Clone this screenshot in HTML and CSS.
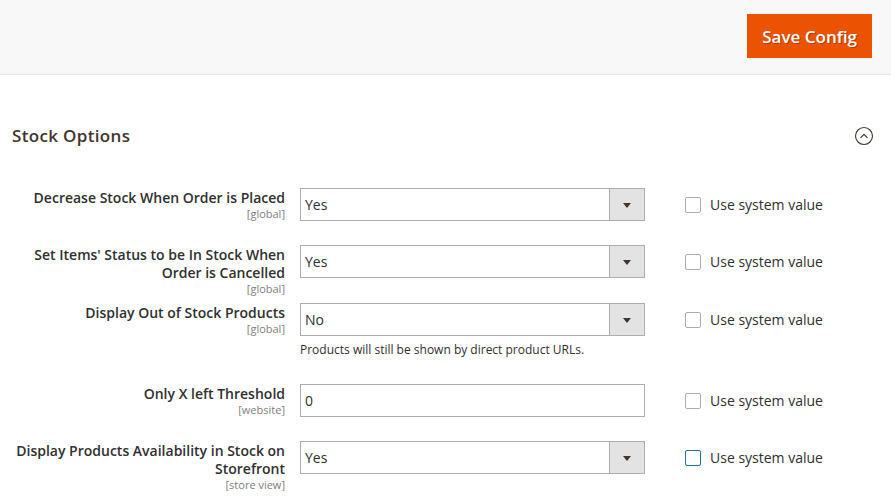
FILE: index.html
```html
<!DOCTYPE html>
<html lang="en">
<head>
  <meta charset="UTF-8" />
  <title>Configuration - Inventory</title>
  <link rel="stylesheet" href="styles.css">
</head>
<body>

<header class="page-actions">
  <button class="btn-primary" type="button">Save Config</button>
</header>

<main class="config">
  <div class="section-head">
    <h2>Stock Options</h2>
    <svg class="collapse" width="20" height="20" viewBox="0 0 20 20">
      <circle cx="10" cy="10" r="8.5" fill="none" stroke="#41362f" stroke-width="1.1" />
      <polyline points="6.5,11.8 10,8.3 13.5,11.8" fill="none" stroke="#41362f" stroke-width="1.2" />
    </svg>
  </div>

  <div class="fields">
    <div class="field">
      <div class="label">Decrease Stock When Order is Placed<span class="scope">[global]</span></div>
      <div class="value">
        <div class="select"><span class="select-text">Yes</span><span class="select-arrow"></span></div>
      </div>
      <label class="use-default"><span class="check"></span>Use system value</label>
    </div>

    <div class="field">
      <div class="label">Set Items' Status to be In Stock When Order is Cancelled<span class="scope">[global]</span></div>
      <div class="value">
        <div class="select"><span class="select-text">Yes</span><span class="select-arrow"></span></div>
      </div>
      <label class="use-default"><span class="check"></span>Use system value</label>
    </div>

    <div class="field">
      <div class="label">Display Out of Stock Products<span class="scope">[global]</span></div>
      <div class="value">
        <div class="select"><span class="select-text">No</span><span class="select-arrow"></span></div>
        <p class="note">Products will still be shown by direct product URLs.</p>
      </div>
      <label class="use-default"><span class="check"></span>Use system value</label>
    </div>

    <div class="field">
      <div class="label">Only X left Threshold<span class="scope">[website]</span></div>
      <div class="value">
        <div class="input">0</div>
      </div>
      <label class="use-default"><span class="check"></span>Use system value</label>
    </div>

    <div class="field">
      <div class="label">Display Products Availability in Stock on Storefront<span class="scope">[store view]</span></div>
      <div class="value">
        <div class="select"><span class="select-text">Yes</span><span class="select-arrow"></span></div>
      </div>
      <label class="use-default"><span class="check focus"></span>Use system value</label>
    </div>
  </div>
</main>

</body>
</html>
```

FILE: styles.css
```css
body {
  font-family: 'Open Sans', 'Noto Sans', sans-serif;
  color: #303030;
  background: #fff;
  margin: 0;
}
.page-actions {
  height: 75px;
  background: #f8f8f8;
  border-bottom: 1px solid #e3e3e3;
  display: flex;
  justify-content: flex-end;
  align-items: flex-start;
  padding: 14px 19px 0 0;
  box-sizing: border-box;
}
.btn-primary {
  height: 44px;
  padding: 0 15px;
  border: none;
  background: #eb5202;
  color: #fff;
  font-family: inherit;
  font-size: 17px;
  font-weight: 600;
  text-shadow: 1px 1px 0 rgba(0, 0, 0, 0.25);
  cursor: pointer;
}
.section-head {
  display: flex;
  justify-content: space-between;
  align-items: center;
  margin-top: 49px;
  padding: 0 17px 0 12px;
}
.section-head h2 {
  margin: 0;
  font-size: 17px;
  line-height: 24px;
  font-weight: 600;
  color: #41362f;
  letter-spacing: 0.02em;
}
.fields {
  margin-top: 40px;
  padding-left: 12px;
}
.field {
  display: flex;
  align-items: flex-start;
  margin-bottom: 24px;
}
.label {
  width: 273px;
  margin: 1px 0 -3px 0;
  text-align: right;
  font-size: 14px;
  line-height: 18px;
  font-weight: 600;
  color: #303030;
}
.scope {
  display: block;
  font-size: 11px;
  line-height: 14px;
  font-weight: 400;
  color: #808080;
  margin-bottom: -14px;
}
.value {
  width: 345px;
  margin-left: 15px;
}
.select, .input {
  height: 33px;
  box-sizing: border-box;
  border: 1px solid #adadad;
  background: #fff;
  display: flex;
  font-size: 14px;
  line-height: 31px;
  color: #303030;
}
.input {
  padding-left: 4px;
}
.select-text {
  flex: 1;
  padding-left: 4px;
}
.select-arrow {
  width: 34px;
  border-left: 1px solid #adadad;
  background: #e3e3e3;
  display: flex;
  align-items: center;
  justify-content: center;
}
.select-arrow::after {
  content: "";
  border-left: 4px solid transparent;
  border-right: 4px solid transparent;
  border-top: 5px solid #41362f;
  margin-top: 1px;
}
.note {
  margin: 6px 0 2px 0;
  font-size: 12px;
  line-height: 16px;
  color: #303030;
}
.use-default {
  margin-left: 40px;
  height: 33px;
  display: flex;
  align-items: center;
  font-size: 14px;
  color: #303030;
}
.check {
  width: 16px;
  height: 16px;
  box-sizing: border-box;
  border: 1px solid #adadad;
  border-radius: 2px;
  background: #fff;
  margin-right: 9px;
}
.check.focus {
  border-color: #2173b5;
}
```
